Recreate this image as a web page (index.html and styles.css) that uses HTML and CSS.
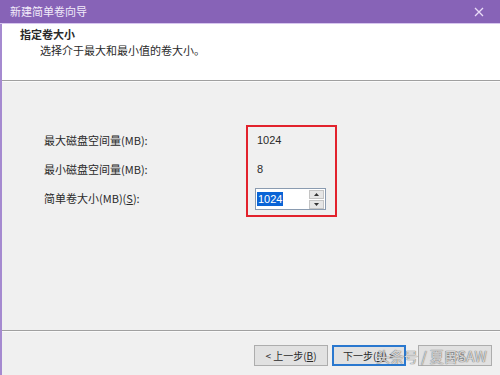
FILE: index.html
```html
<!DOCTYPE html>
<html lang="zh-CN">
<head>
    <meta charset="UTF-8">
    <meta name="viewport" content="width=device-width, initial-scale=1.0">
    <title>新建简单卷向导</title>
    <link rel="stylesheet" href="styles.css">
</head>
<body>
    <div class="window">
        <div class="titlebar">
            <span class="title">新建简单卷向导</span>
            <svg class="close" width="10" height="10" viewBox="0 0 10 10">
                <path d="M1 1L9 9M9 1L1 9" stroke="#eadcf8" stroke-width="1.3"/>
            </svg>
        </div>

        <div class="header">
            <div class="heading">指定卷大小</div>
            <div class="subheading">选择介于最大和最小值的卷大小。</div>
        </div>
        <div class="rule"></div>

        <div class="content">
            <div class="labels">
                <div class="row">最大磁盘空间量(MB):</div>
                <div class="row mid">最小磁盘空间量(MB):</div>
                <div class="row">简单卷大小(MB)(<u>S</u>):</div>
            </div>
            <div class="values">
                <div class="row value">1024</div>
                <div class="row mid value">8</div>
                <div class="row">
                    <div class="spin">
                        <span class="spin-text"><span class="selected">1024</span></span>
                        <div class="spin-buttons">
                            <div class="spin-btn">
                                <svg width="5" height="3" viewBox="0 0 5 3"><path d="M0 3L2.5 0L5 3Z" fill="#333"/></svg>
                            </div>
                            <div class="spin-btn">
                                <svg width="5" height="3" viewBox="0 0 5 3"><path d="M0 0L5 0L2.5 3Z" fill="#333"/></svg>
                            </div>
                        </div>
                    </div>
                </div>
            </div>
        </div>

        <div class="footer">
            <button class="btn">&lt; 上一步(<u>B</u>)</button>
            <button class="btn default">下一步(<u>N</u>) &gt;</button>
            <button class="btn cancel">取消</button>
        </div>

        <div class="watermark">头条号 / 夏目SAW</div>
    </div>
</body>
</html>
```

FILE: styles.css
```css
* {
    box-sizing: border-box;
}
body {
    margin: 0;
    width: 500px;
    height: 375px;
    overflow: hidden;
    font-family: "Noto Sans CJK SC", "Liberation Sans", sans-serif;
    font-size: 11px;
    color: #2a2a2a;
}
.window {
    position: relative;
    height: 375px;
    border-left: 2px solid #a58ad0;
    background: #f0f0f0;
    display: flex;
    flex-direction: column;
}
.titlebar {
    height: 24px;
    background: #8763b7;
    border-bottom: 1px solid #d7c6ef;
    margin-left: -2px;
    padding: 0 16px 0 10px;
    display: flex;
    align-items: center;
    justify-content: space-between;
}
.title {
    color: #f2ecfa;
    font-size: 11px;
    margin-top: -2px;
}
.header {
    height: 56px;
    background: #fff;
    padding: 2px 18px;
}
.heading {
    font-weight: bold;
    line-height: 16px;
}
.subheading {
    padding-left: 20px;
    line-height: 16px;
}
.rule {
    border-top: 1px solid #a0a0a0;
    border-bottom: 1px solid #fbfbfb;
}
.content {
    height: 248px;
    display: flex;
    align-items: flex-start;
    padding: 43px 0 0 42px;
}
.labels {
    width: 202px;
    padding-top: 2px;
    display: flex;
    flex-direction: column;
}
.row {
    height: 26px;
    display: flex;
    align-items: center;
}
.row.mid {
    height: 32px;
}
.values {
    width: 91px;
    border: 2px solid #e2222c;
    padding: 0 0 2px 7px;
    display: flex;
    flex-direction: column;
}
.values .row:last-child {
    height: 28px;
}
.value {
    padding-left: 2px;
    font-family: "Liberation Sans", "Noto Sans CJK SC", sans-serif;
    font-size: 11px;
}
.spin {
    width: 71px;
    height: 22px;
    background: #fff;
    border: 1px solid #8a9bb0;
    display: flex;
    align-items: center;
    justify-content: space-between;
    padding: 0 1px 0 1px;
}
.spin-text {
    font-family: "Liberation Sans", sans-serif;
    font-size: 11px;
}
.selected {
    background: #0a64d6;
    color: #fff;
    padding: 1px 1px;
}
.spin-buttons {
    display: flex;
    flex-direction: column;
    gap: 1px;
}
.spin-btn {
    width: 15px;
    height: 9px;
    background: #e6e6e6;
    border: 1px solid #c4c4c4;
    display: flex;
    align-items: center;
    justify-content: center;
}
.footer {
    flex: 1;
    border-top: 1px solid #a0a0a0;
    box-shadow: inset 0 1px 0 #fafafa;
    display: flex;
    align-items: flex-start;
    padding: 14px 0 0 252px;
    gap: 4px;
}
.btn {
    width: 74px;
    height: 21px;
    background: #e1e1e1;
    border: 1px solid #adadad;
    font-family: "Noto Sans CJK SC", sans-serif;
    font-size: 10px;
    color: #2a2a2a;
    padding: 0;
}
.btn.default {
    border: 1px solid #2a78cf;
    box-shadow: inset 0 0 0 1px #2a78cf;
}
.btn.cancel {
    margin-left: 8px;
    color: #8a8a8a;
}
.watermark {
    position: absolute;
    left: 374px;
    top: 346px;
    white-space: nowrap;
    font-size: 14px;
    color: rgba(255, 255, 255, 0.7);
    text-shadow: 0 0 1px #6e6e6e, 0 0 1px #6e6e6e;
}
```
